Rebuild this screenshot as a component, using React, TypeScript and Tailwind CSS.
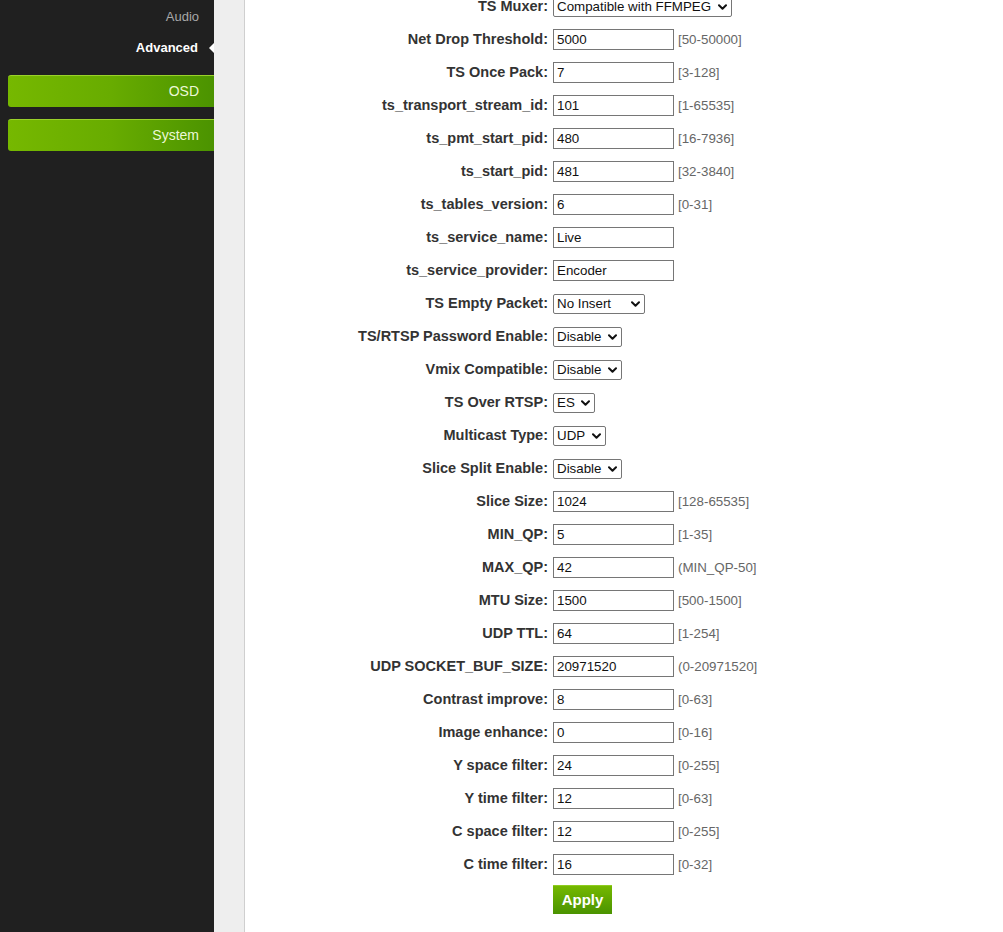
import { useState } from 'react'

type Field =
  | { kind: 'input'; label: string; value: string; hint?: string }
  | { kind: 'select'; label: string; value: string; options: string[]; width: string }

const FIELDS: Field[] = [
  { kind: 'select', label: 'TS Muxer', value: 'Compatible with FFMPEG', options: ['Compatible with FFMPEG', 'Default'], width: 'w-[179px]' },
  { kind: 'input', label: 'Net Drop Threshold', value: '5000', hint: '[50-50000]' },
  { kind: 'input', label: 'TS Once Pack', value: '7', hint: '[3-128]' },
  { kind: 'input', label: 'ts_transport_stream_id', value: '101', hint: '[1-65535]' },
  { kind: 'input', label: 'ts_pmt_start_pid', value: '480', hint: '[16-7936]' },
  { kind: 'input', label: 'ts_start_pid', value: '481', hint: '[32-3840]' },
  { kind: 'input', label: 'ts_tables_version', value: '6', hint: '[0-31]' },
  { kind: 'input', label: 'ts_service_name', value: 'Live' },
  { kind: 'input', label: 'ts_service_provider', value: 'Encoder' },
  { kind: 'select', label: 'TS Empty Packet', value: 'No Insert', options: ['No Insert', 'Insert'], width: 'w-[92px]' },
  { kind: 'select', label: 'TS/RTSP Password Enable', value: 'Disable', options: ['Disable', 'Enable'], width: 'w-[69px]' },
  { kind: 'select', label: 'Vmix Compatible', value: 'Disable', options: ['Disable', 'Enable'], width: 'w-[69px]' },
  { kind: 'select', label: 'TS Over RTSP', value: 'ES', options: ['ES', 'TS'], width: 'w-[42px]' },
  { kind: 'select', label: 'Multicast Type', value: 'UDP', options: ['UDP', 'RTP'], width: 'w-[53px]' },
  { kind: 'select', label: 'Slice Split Enable', value: 'Disable', options: ['Disable', 'Enable'], width: 'w-[69px]' },
  { kind: 'input', label: 'Slice Size', value: '1024', hint: '[128-65535]' },
  { kind: 'input', label: 'MIN_QP', value: '5', hint: '[1-35]' },
  { kind: 'input', label: 'MAX_QP', value: '42', hint: '(MIN_QP-50]' },
  { kind: 'input', label: 'MTU Size', value: '1500', hint: '[500-1500]' },
  { kind: 'input', label: 'UDP TTL', value: '64', hint: '[1-254]' },
  { kind: 'input', label: 'UDP SOCKET_BUF_SIZE', value: '20971520', hint: '(0-20971520]' },
  { kind: 'input', label: 'Contrast improve', value: '8', hint: '[0-63]' },
  { kind: 'input', label: 'Image enhance', value: '0', hint: '[0-16]' },
  { kind: 'input', label: 'Y space filter', value: '24', hint: '[0-255]' },
  { kind: 'input', label: 'Y time filter', value: '12', hint: '[0-63]' },
  { kind: 'input', label: 'C space filter', value: '12', hint: '[0-255]' },
  { kind: 'input', label: 'C time filter', value: '16', hint: '[0-32]' },
]

function Chevron() {
  return (
    <svg width="9" height="6" viewBox="0 0 9 6" className="pointer-events-none absolute right-[5px] top-1/2 -translate-y-1/2">
      <polyline points="1,1.2 4.5,4.7 8,1.2" fill="none" stroke="#111" strokeWidth="2" strokeLinecap="round" strokeLinejoin="round" />
    </svg>
  )
}

function Row({ field }: { field: Field }) {
  const [value, setValue] = useState(field.value)
  return (
    <div className="flex h-[33px] items-center">
      <div className="w-[303px] shrink-0 text-right text-[14.5px] font-bold text-[#333]">{field.label}:</div>
      <div className="ml-[5px] flex items-center">
        {field.kind === 'input' ? (
          <input
            type="text"
            value={value}
            onChange={(e) => setValue(e.target.value)}
            className="h-[21px] w-[121px] border border-[#767676] bg-white pl-[3px] text-[13.33px] text-[#111] outline-none"
          />
        ) : (
          <div className={`relative ${field.width}`}>
            <select
              value={value}
              onChange={(e) => setValue(e.target.value)}
              className="block h-[20px] w-full appearance-none rounded-[2px] border border-[#767676] bg-white pl-[3px] text-[13.33px] leading-[18px] text-[#111] outline-none"
            >
              {field.options.map((o) => (
                <option key={o}>{o}</option>
              ))}
            </select>
            <Chevron />
          </div>
        )}
        {field.kind === 'input' && field.hint && (
          <span className="ml-[4px] text-[13.33px] text-[#666]">{field.hint}</span>
        )}
      </div>
    </div>
  )
}

export default function App() {
  return (
    <div className="flex h-[932px] overflow-hidden bg-white" style={{ fontFamily: '"Liberation Sans", Arial, sans-serif' }}>
      {/* Sidebar */}
      <div className="relative w-[214px] shrink-0 bg-[#202020]">
        <div className="flex h-[33px] items-center justify-end pr-[15px] text-[13px] text-[#a8a8a8]">Audio</div>
        <div className="relative flex h-[30px] items-center justify-end pr-[16px] text-[13px] font-bold text-white">
          Advanced
          <span className="absolute right-0 top-1/2 h-0 w-0 -translate-y-1/2 border-y-[5px] border-r-[5px] border-y-transparent border-r-white" />
        </div>
        <div className="mt-[12px] flex flex-col gap-[12px] pl-[8px]">
          <div className="flex h-[32px] items-center justify-end rounded-l-[3px] border-t border-[#9ad22a] bg-gradient-to-r from-[#76b800] via-[#68ac00] to-[#4b9300] pr-[15px] text-[14px] text-[#ecf8d6]">
            OSD
          </div>
          <div className="flex h-[32px] items-center justify-end rounded-l-[3px] border-t border-[#9ad22a] bg-gradient-to-r from-[#76b800] via-[#68ac00] to-[#4b9300] pr-[15px] text-[14px] text-[#ecf8d6]">
            System
          </div>
        </div>
      </div>

      {/* Gutter */}
      <div className="w-[31px] shrink-0 border-r border-[#cfcfcf] bg-[#eeeeee]" />

      {/* Form */}
      <div className="flex-1">
        <div className="mt-[-10px]">
          {FIELDS.map((f) => (
            <Row key={f.label} field={f} />
          ))}
        </div>
        <div className="ml-[308px] mt-[4px]">
          <button className="h-[29px] w-[59px] border-t border-[#8fcc20] bg-gradient-to-b from-[#74b800] to-[#4a9300] text-[15px] font-bold text-white">
            Apply
          </button>
        </div>
      </div>
    </div>
  )
}
